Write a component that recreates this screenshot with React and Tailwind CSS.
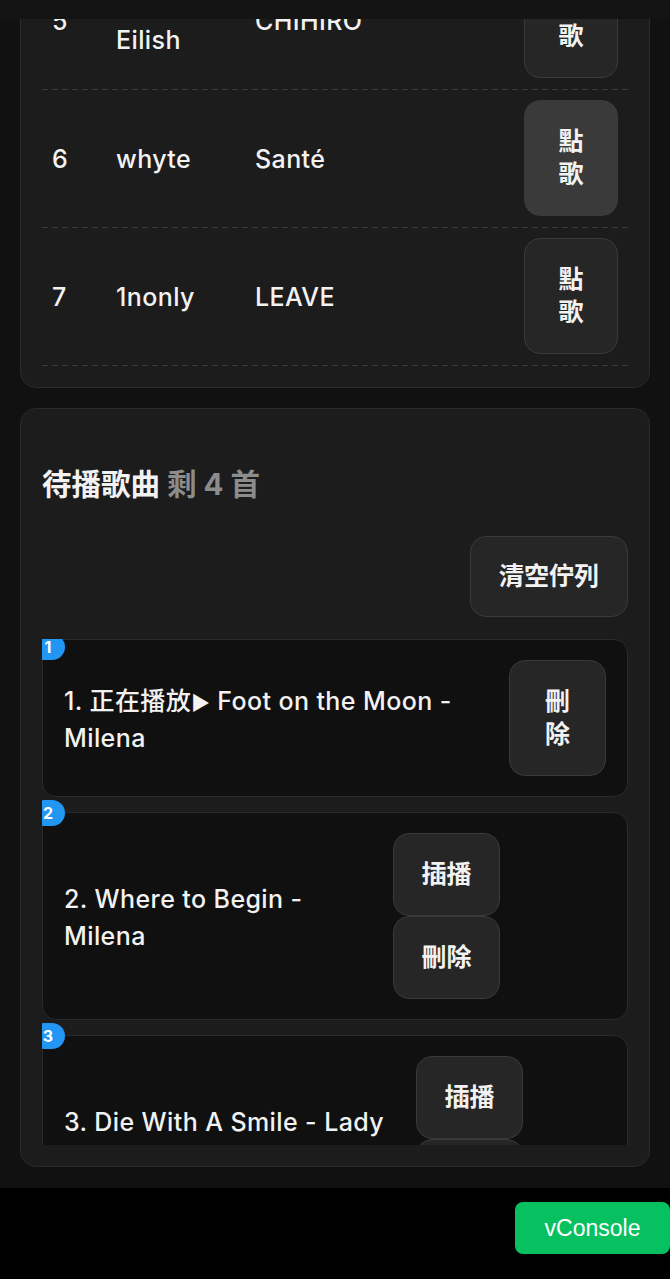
import React from 'react';

const rows = [
    { n: 5, artist: 'Billie Eilish', song: 'CHIHIRO' },
    { n: 6, artist: 'whyte', song: 'Santé', active: true },
    { n: 7, artist: '1nonly', song: 'LEAVE' },
];

const queue = [
    {
        n: 1,
        text: <>1. 正在播放<span className="text-[20px] leading-none">▶</span> Foot on the Moon - Milena</>,
        actions: ['刪除'],
        actW: 'w-[97px]',
        badgeTop: '-top-[6px]',
    },
    { n: 2, text: '2. Where to Begin - Milena', actions: ['插播', '刪除'], actW: 'w-[213px]', badgeTop: '-top-[13px]' },
    { n: 3, text: '3. Die With A Smile - Lady Gaga & Bruno Mars', actions: ['插播', '刪除'], actW: 'w-[190px]', badgeTop: '-top-[13px]' },
];

const btn = 'rounded-[16px] border border-[#3a3a3a] px-[27px] py-[24px] text-[25px] leading-[33px] font-semibold text-[#f2f2f2]';

const App = () => {
    return (
        <div className="h-[1279px] flex flex-col bg-black text-[#f2f2f2] font-['Inter','DejaVu_Sans','Noto_Sans_CJK_TC',sans-serif]">
            {/* top strip */}
            <div className="h-[19px] shrink-0 bg-[#141414]" />

            <main className="h-[1169px] shrink-0 overflow-hidden bg-[#111111] px-[20px]">
                {/* song list card */}
                <section className="mt-[-89px] rounded-[16px] border border-[#2a2a2a] bg-[#1c1c1c] p-[21px]">
                    {rows.map((r) => (
                        <div key={r.n}>
                            <div className="grid grid-cols-[64px_139px_1fr_114px] items-center pt-[10px] pb-[11px] text-[25px] leading-[37px] font-medium tracking-[0.4px]">
                                <div className="px-[10px] pt-[3px]">{r.n}</div>
                                <div className="px-[10px] pt-[3px]">{r.artist}</div>
                                <div className="px-[10px] pt-[3px]">{r.song}</div>
                                <div className="px-[10px] tracking-normal">
                                    <button className={`${btn} w-[94px] ${r.active ? 'bg-[#3a3a3a]' : 'bg-[#262626]'}`}>點歌</button>
                                </div>
                            </div>
                            <div className="h-px bg-[repeating-linear-gradient(90deg,#3a3a3a_0_6px,transparent_6px_10px)]" />
                        </div>
                    ))}
                </section>

                {/* queue card */}
                <section className="mt-[20px] rounded-[16px] border border-[#2a2a2a] bg-[#1c1c1c] p-[21px]">
                    <h2 className="mt-[32px] text-[29.5px] leading-[45px] font-bold">
                        待播歌曲 <span className="text-[#8c8c8c]">剩 4 首</span>
                    </h2>
                    <div className="mt-[29px] flex justify-end">
                        <button className="rounded-[16px] border border-[#3a3a3a] bg-[#262626] px-[28px] py-[23px] text-[25px] leading-[33px] font-semibold">清空佇列</button>
                    </div>
                    <div className="mt-[22px] h-[506px] overflow-hidden flex flex-col gap-[15px]">
                        {queue.map((q) => (
                            <div key={q.n} className="relative shrink-0 flex items-center gap-5 rounded-[14px] border border-[#2a2a2a] bg-[#101010] px-[21px] py-[20px]">
                                <span className={`absolute -left-3 ${q.badgeTop} h-[26px] w-[34px] rounded-full bg-[#2196f3] text-white text-[16px] font-bold flex items-center justify-center leading-none`}>{q.n}</span>
                                <div className="flex-1 min-w-0 pt-[3px] text-[25px] leading-[37px] font-medium tracking-[0.4px]">{q.text}</div>
                                <div className={`${q.actW} shrink-0 flex flex-col items-start`}>
                                    {q.actions.map((a) => (
                                        <button key={a} className={`${btn} bg-[#262626] ${q.actions.length === 1 ? 'w-full' : 'w-[107px]'}`}>{a}</button>
                                    ))}
                                </div>
                            </div>
                        ))}
                    </div>
                </section>
            </main>

            {/* footer with vConsole */}
            <div className="flex-1 flex justify-end items-start pt-[14px]">
                <button className="h-[52px] w-[155px] rounded-[8px] bg-[#07c160] text-white text-[23px] font-['Liberation_Sans',sans-serif]">vConsole</button>
            </div>
        </div>
    );
};

export default App;
